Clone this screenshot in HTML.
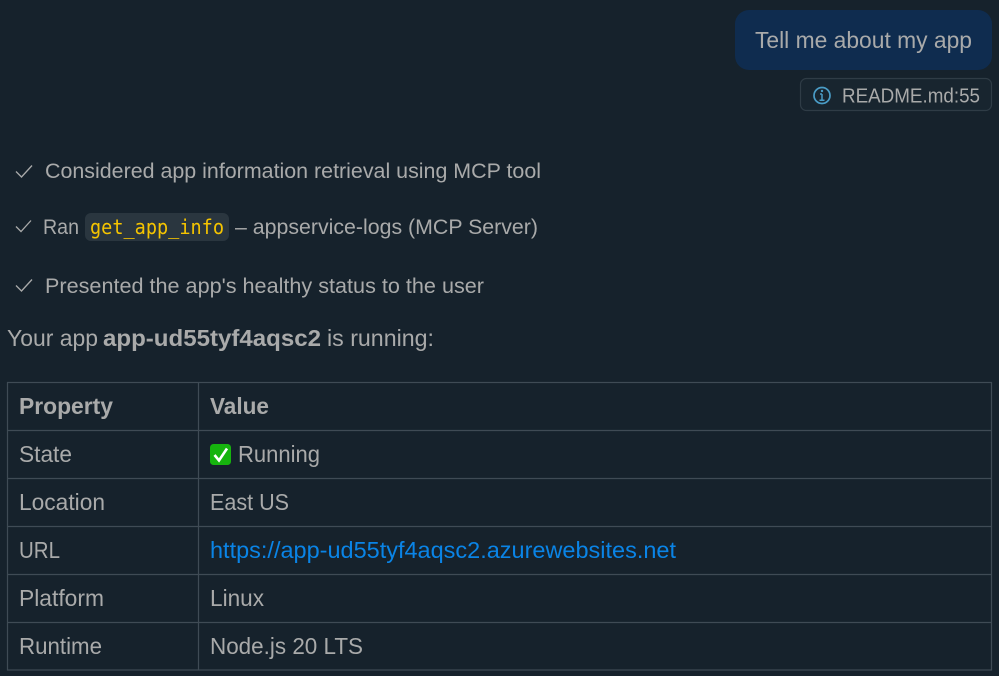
<!DOCTYPE html>
<html lang="en">
<head>
<meta charset="utf-8">
<title>Tell me about my app</title>
<style>
html,body{margin:0;padding:0;background:#16222c;width:999px;height:676px;overflow:hidden}
svg{display:block;filter:blur(.35px)}
text{font-family:"Liberation Sans",sans-serif;font-size:23px;fill:#a9aaaa}
.s{font-size:21.5px}
.b{font-weight:bold}
.m{font-family:"DejaVu Sans Mono",monospace;font-size:20.5px;fill:#f5c400}
</style>
</head>
<body>
<svg width="999" height="676" viewBox="0 0 999 676" xmlns="http://www.w3.org/2000/svg">
<rect width="999" height="676" fill="#16222c"/>

<rect x="735" y="10" width="257" height="60" rx="14" fill="#0f2c4f"/>
<text x="755" y="48" textLength="217" lengthAdjust="spacingAndGlyphs">Tell me about my app</text>

<rect x="800.500" y="78.500" width="191" height="32" rx="6" fill="#18252f" stroke="#2f3c46" stroke-width="1.200"/>
<circle cx="822" cy="95.500" r="8" fill="none" stroke="#4a9cc6" stroke-width="1.700"/>
<path d="M822 94v6M819.500 100.200h5M820 94h2" fill="none" stroke="#4a9cc6" stroke-width="1.500"/>
<circle cx="822" cy="91" r="1.200" fill="#4a9cc6"/>
<text x="842" y="102.500" textLength="138" lengthAdjust="spacingAndGlyphs" style="font-size:20.500px">README.md:55</text>

<path d="M16 171.500l5.500 5.500 10.500-11.500" fill="none" stroke="#a9aaaa" stroke-width="1.300"/>
<text x="45" y="178" class="s" textLength="496" lengthAdjust="spacingAndGlyphs">Considered app information retrieval using MCP tool</text>

<path d="M16 226.500l5 5 10-11" fill="none" stroke="#a9aaaa" stroke-width="1.300"/>
<text x="43" y="234" class="s" textLength="36" lengthAdjust="spacingAndGlyphs">Ran</text>
<rect x="85" y="213" width="144" height="28" rx="6" fill="#2a363f"/>
<text x="90" y="234" class="m" textLength="134" lengthAdjust="spacingAndGlyphs">get_app_info</text>
<text x="235" y="234" class="s" textLength="303" lengthAdjust="spacingAndGlyphs">– appservice-logs (MCP Server)</text>

<path d="M16 285.500l5.500 5.500 10.500-11.500" fill="none" stroke="#a9aaaa" stroke-width="1.300"/>
<text x="45" y="293" class="s" textLength="439" lengthAdjust="spacingAndGlyphs">Presented the app's healthy status to the user</text>

<text x="7" y="346" textLength="91" lengthAdjust="spacingAndGlyphs">Your app</text>
<text x="103" y="346" class="b" textLength="218" lengthAdjust="spacingAndGlyphs">app-ud55tyf4aqsc2</text>
<text x="327" y="346" textLength="107" lengthAdjust="spacingAndGlyphs">is running:</text>

<g fill="none" stroke="#3f4b55" stroke-width="1.200">
<rect x="7.500" y="382.500" width="984" height="287.500"/>
<path d="M198.500 382v288M7 430.500h985M7 478.500h985M7 526.500h985M7 574.500h985M7 622.500h985"/>
</g>

<text x="19" y="414" class="b" textLength="94" lengthAdjust="spacingAndGlyphs">Property</text>
<text x="210" y="414" class="b" textLength="59" lengthAdjust="spacingAndGlyphs">Value</text>

<text x="19" y="462" textLength="53" lengthAdjust="spacingAndGlyphs">State</text>
<rect x="210" y="444" width="21" height="21" rx="3.500" fill="#16b40e"/>
<path d="M214.500 455l4.500 5.500 8-12" fill="none" stroke="#ffffff" stroke-width="2.600"/>
<text x="238" y="462" textLength="82" lengthAdjust="spacingAndGlyphs">Running</text>

<text x="19" y="510" textLength="86" lengthAdjust="spacingAndGlyphs">Location</text>
<text x="210" y="510" textLength="79" lengthAdjust="spacingAndGlyphs">East US</text>

<text x="19" y="558" textLength="41" lengthAdjust="spacingAndGlyphs">URL</text>
<text x="210" y="558" textLength="466" lengthAdjust="spacingAndGlyphs" style="fill:#0a84e6">https://app-ud55tyf4aqsc2.azurewebsites.net</text>

<text x="19" y="606" textLength="85" lengthAdjust="spacingAndGlyphs">Platform</text>
<text x="210" y="606" textLength="54" lengthAdjust="spacingAndGlyphs">Linux</text>

<text x="19" y="654" textLength="83" lengthAdjust="spacingAndGlyphs">Runtime</text>
<text x="210" y="654" textLength="153" lengthAdjust="spacingAndGlyphs">Node.js 20 LTS</text>
</svg>
</body>
</html>
